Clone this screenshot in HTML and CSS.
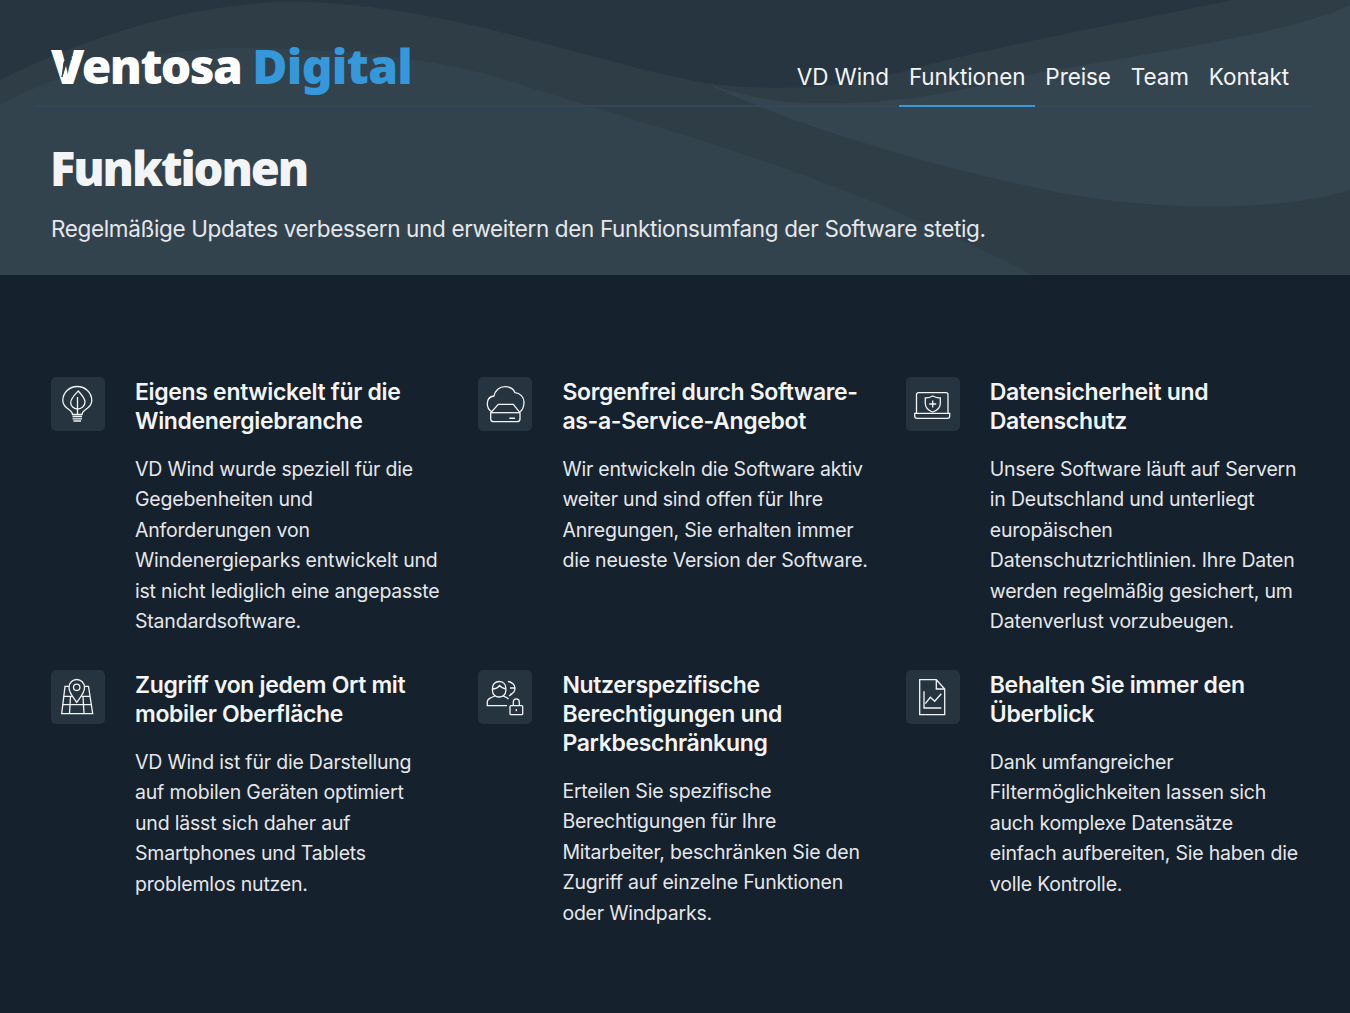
FILE: index.html

```html
<!DOCTYPE html>
<html lang="de">
<head>
  <meta charset="UTF-8">
  <title>Funktionen - Ventosa Digital</title>
  <meta name="viewport" content="width=device-width, initial-scale=1.0"/>
  <link rel="stylesheet" href="styles.css">
</head>
<body>
  <header class="hero">
    <svg class="hero-waves" viewBox="0 0 1350 275" preserveAspectRatio="none" aria-hidden="true">
      <path class="wave-mid" d="M0,80 C100,30 220,-5 327,3 C470,12 590,62 706,83 C780,92 840,88 900,72 C1020,40 1140,20 1232,0 L1350,0 L1350,275 L0,275 Z"/>
      <path class="wave-low" d="M0,105 C60,70 170,45 258,48 C350,50 440,58 517,83 C660,130 830,170 1033,275 L0,275 Z"/>
      <path class="wave-band" d="M1350,5 C1290,35 1120,57 1000,80 C930,100 860,105 800,103 C760,100 730,92 706,83 C790,125 930,165 1033,187 C1130,210 1270,215 1350,190 Z"/>
    </svg>

    <div class="topbar">
      <a class="logo" href="#">
        <span class="logo-white">Ventosa</span> <span class="logo-blue">Digital</span>
        <svg class="logo-notch" viewBox="0 0 24 36" aria-hidden="true">
          <path d="M22,1 L16,10 L11,26 L13,11 Z"/>
          <path d="M22,4 L18,5 M21,8 L17,8"/>
        </svg>
      </a>
      <nav class="nav">
        <a href="#">VD Wind</a>
        <a href="#" class="active">Funktionen</a>
        <a href="#">Preise</a>
        <a href="#">Team</a>
        <a href="#">Kontakt</a>
      </nav>
    </div>

    <div class="hero-text">
      <h1>Funktionen</h1>
      <p>Regelmäßige Updates verbessern und erweitern den Funktionsumfang der Software stetig.</p>
    </div>
  </header>

  <main class="features">
    <section class="feature">
      <div class="icon-box">
        <svg viewBox="0 0 54 54">
          <path d="M21.5,37.5 C21.5,35 20,34 18.5,33 C14.5,30.5 11.8,27.5 11.8,23.5 C11.8,15.500 18.500,9.500 26.300,9.500 C34.100,9.500 40.800,15.500 40.800,23.500 C40.800,27.500 38,30.500 34,33 C32.500,34 31,35 31,37.500 Z"/>
          <path d="M21.500,39.500 H31 M21.500,41.800 H31 M22.500,44 H30"/>
          <path d="M27.300,14 C31,18 34,21.500 34,25 C34,29 30.500,32 26.300,32 C22.500,32 19.700,29 19.700,25.500 C19.700,21.500 24,17.500 27.300,14 Z"/>
          <path d="M26.500,20 V37"/>
        </svg>
      </div>
      <div class="feature-text">
        <h3>Eigens entwickelt für die Windenergiebranche</h3>
        <p>VD Wind wurde speziell für die Gegebenheiten und Anforderungen von Windenergieparks entwickelt und ist nicht lediglich eine angepasste Standardsoftware.</p>
      </div>
    </section>

    <section class="feature">
      <div class="icon-box">
        <svg viewBox="0 0 54 54">
          <path d="M13.700,34.700 C10.800,33 9.300,30 9.300,26.800 C9.300,22.500 12,19.500 16,19 C17,13.500 21.500,9.700 27,9.700 C31.500,9.700 35.500,12 37,15.700 C42,16 46,20 46,25 C46,29.500 44.500,33 42,34.700"/>
          <path d="M20.300,27.300 H35.300 L42,35.700 V41.700 C42,43.500 41,44.700 39,44.700 H15.700 C13.700,44.700 12.700,43.500 12.700,41.700 V35.700 Z"/>
          <path d="M12.700,35.700 H42"/>
          <path class="solid" d="M31.300,40.500 H37 V42 H31.300 Z"/>
        </svg>
      </div>
      <div class="feature-text">
        <h3>Sorgenfrei durch Software-as-a-Service-Angebot</h3>
        <p>Wir entwickeln die Software aktiv weiter und sind offen für Ihre Anregungen, Sie erhalten immer die neueste Version der Software.</p>
      </div>
    </section>

    <section class="feature">
      <div class="icon-box">
        <svg viewBox="0 0 54 54">
          <path d="M10.500,36.300 V17.700 C10.500,16.500 11.300,15.700 12.500,15.700 H40 C41.200,15.700 42,16.500 42,17.700 V36.300"/>
          <path d="M8.700,36.300 H43.700 V39 C43.700,40.500 42.700,41.300 41.500,41.300 H11 C9.700,41.300 8.700,40.500 8.700,39 Z"/>
          <path d="M19.300,21 C22,21 24.500,20.300 26.700,19 C29,20.300 31.500,21 34.300,21 V26.500 C34.300,30.500 31,33.500 26.700,35 C22.500,33.500 19.300,30.500 19.300,26.500 Z"/>
          <path d="M26.700,23.500 V30.500 M23.200,27 H30.200"/>
        </svg>
      </div>
      <div class="feature-text">
        <h3>Datensicherheit und Datenschutz</h3>
        <p>Unsere Software läuft auf Servern in Deutschland und unterliegt europäischen Datenschutzrichtlinien. Ihre Daten werden regelmäßig gesichert, um Datenverlust vorzubeugen.</p>
      </div>
    </section>

    <section class="feature">
      <div class="icon-box">
        <svg viewBox="0 0 54 54">
          <path d="M25.700,32.300 C23,28 18,23.500 18,17.500 C18,13 21.500,9.500 25.700,9.500 C30,9.500 33.500,13 33.500,17.500 C33.500,23.500 28.500,28 25.700,32.300 Z"/>
          <circle cx="25.700" cy="17.300" r="3.200"/>
          <path d="M18,16.300 H14 L10.700,43.700 H41.700 L37.500,16.300 H33.500"/>
          <path d="M12.800,26.300 H21 M30.500,26.300 H39 M11.800,34.700 H40.500"/>
          <path d="M19.500,26.300 L18.500,43.700 M32,26.300 L33,43.700"/>
        </svg>
      </div>
      <div class="feature-text">
        <h3>Zugriff von jedem Ort mit mobiler Oberfläche</h3>
        <p>VD Wind ist für die Darstellung auf mobilen Geräten optimiert<br>und lässt sich daher auf Smartphones und Tablets problemlos nutzen.</p>
      </div>
    </section>

    <section class="feature">
      <div class="icon-box">
        <svg viewBox="0 0 54 54">
          <path d="M14.500,18 C14.500,14 17.500,11.500 21,11.500 C24.800,11.500 27.800,14 27.800,18 V21 C27.800,24.500 24.800,27 21,27 C17.500,27 14.500,24.500 14.500,21 Z"/>
          <path d="M14.500,19 C18,19 20,17.500 21.500,15.500 C23,17.500 25,18.500 27.800,19"/>
          <path d="M29,35.700 H9.300 V32 C9.300,29 12,27.800 17,26 M25,26 C27,26.800 29,27.500 30.500,29"/>
          <path d="M30,11.500 C34,12 37,15 37,18 C37,21 35,23.500 32,24.500 M32,18 H37 M31,26 L34,24"/>
          <rect x="32" y="35.700" width="12.700" height="9" rx="1"/>
          <path d="M35.300,35.700 V32 C35.300,30 36.700,28.800 38.300,28.800 C40,28.800 41.300,30 41.300,32 V35.700"/>
          <path d="M38.300,39 V41.300"/>
        </svg>
      </div>
      <div class="feature-text">
        <h3>Nutzerspezifische Berechtigungen und Parkbeschränkung</h3>
        <p>Erteilen Sie spezifische Berechtigungen für Ihre Mitarbeiter, beschränken Sie den Zugriff auf einzelne Funktionen oder Windparks.</p>
      </div>
    </section>

    <section class="feature">
      <div class="icon-box">
        <svg viewBox="0 0 54 54">
          <path d="M30.300,9.700 H13.700 V44.700 H38.700 V19 Z"/>
          <path d="M30.300,9.700 V19 H38.700"/>
          <path d="M18,21.300 V38 H35.300"/>
          <path d="M19.300,33.700 L24.300,27.300 L28.700,31.300 L35.300,23.700"/>
        </svg>
      </div>
      <div class="feature-text">
        <h3>Behalten Sie immer den Überblick</h3>
        <p>Dank umfangreicher Filtermöglichkeiten lassen sich auch komplexe Datensätze einfach aufbereiten, Sie haben die volle Kontrolle.</p>
      </div>
    </section>
  </main>
</body>
</html>
```

FILE: styles.css

```css
body {
  margin: 0;
  min-height: 1013px;
  background: #15212c;
  color: #e5e7eb;
  font-family: Inter, "Liberation Sans", sans-serif;
}
a {
  color: inherit;
  text-decoration: none;
}

/* header with the wave background */
.hero {
  position: relative;
  height: 275px;
  overflow: hidden;
  background: #26353f;
  box-sizing: border-box;
  padding: 0 34px;
}
.hero-waves {
  position: absolute;
  left: 0;
  top: 0;
  width: 100%;
  height: 100%;
}
.wave-mid { fill: #2e3d46; }
.wave-low { fill: #33434d; }
.wave-band { fill: #35454f; }

.topbar {
  position: relative;
  display: flex;
  justify-content: space-between;
  align-items: flex-end;
  height: 105px;
  padding: 0 17px;
  border-bottom: 2px solid #34465a;
}
.logo {
  position: relative;
  align-self: flex-start;
  margin-top: 33px;
  font-family: "Noto Sans", sans-serif;
  font-size: 48px;
  font-weight: 900;
  letter-spacing: -1.6px;
  line-height: 66px;
  white-space: nowrap;
}
.logo-white { color: #fff; }
.logo-blue {
  color: #3498db;
  letter-spacing: -0.7px;
}
.logo-notch {
  position: absolute;
  left: 0;
  top: 18px;
  width: 24px;
  height: 36px;
}
.logo-notch path {
  fill: #2f3f49;
  stroke: #2f3f49;
  stroke-width: 1;
}
.nav {
  display: flex;
  margin-bottom: -2px;
}
.nav a {
  padding: 0 10px 13px;
  border-bottom: 2px solid transparent;
  font-size: 22.5px;
  letter-spacing: -0.1px;
  line-height: 30px;
  color: #f3f4f6;
}
.nav a.active {
  border-bottom-color: #3498db;
}

.hero-text {
  position: relative;
  padding: 28px 17px 0;
}
.hero-text h1 {
  margin: 0 0 0 -1px;
  font-family: "Noto Sans", sans-serif;
  font-size: 47px;
  font-weight: 900;
  letter-spacing: -2.1px;
  line-height: 66px;
  color: #f3f4f6;
}
.hero-text p {
  margin: 12px 0 0;
  font-size: 22.5px;
  letter-spacing: -0.36px;
  line-height: 32px;
  color: #e5e7eb;
}

/* feature grid */
.features {
  display: grid;
  grid-template-columns: repeat(3, 394px);
  column-gap: 33.4px;
  row-gap: 33px;
  padding: 102px 51px 0;
}
.feature {
  display: flex;
  align-items: flex-start;
  gap: 30px;
}
.icon-box {
  flex: none;
  width: 54px;
  height: 54px;
  border-radius: 5px;
  background: #25343e;
}
.icon-box svg {
  display: block;
  width: 54px;
  height: 54px;
  fill: none;
  stroke: #f3f4f6;
  stroke-width: 1.3;
}
.icon-box svg .solid {
  fill: #f3f4f6;
  stroke: none;
}
.feature-text h3 {
  margin: 1px 0 0;
  font-size: 23px;
  font-weight: 600;
  letter-spacing: -0.33px;
  line-height: 29px;
  color: #f3f4f6;
}
.feature-text p {
  margin: 17.5px 0 0;
  font-size: 19.5px;
  letter-spacing: -0.2px;
  line-height: 30.6px;
  color: #e5e7eb;
}
```
